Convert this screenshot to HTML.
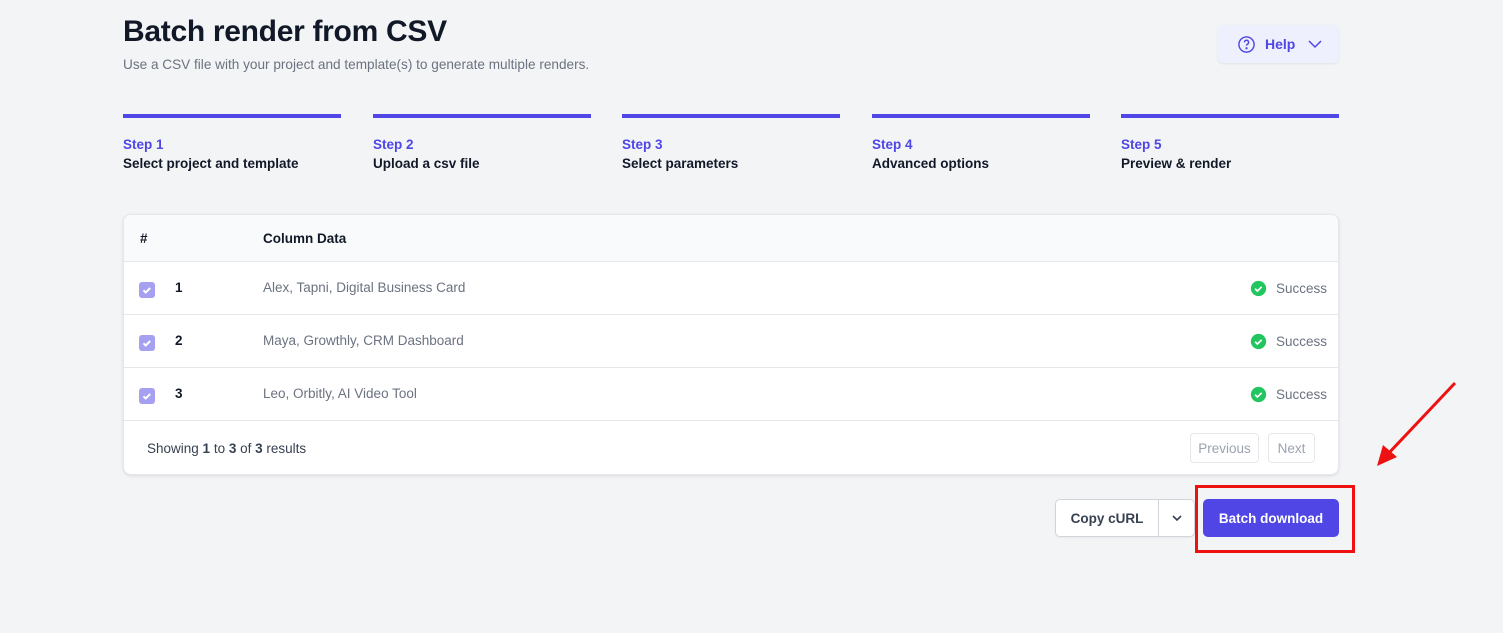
<!DOCTYPE html>
<html><head><style>
*{box-sizing:border-box;margin:0;padding:0}
body{width:1503px;height:633px;background:#f3f4f6;font-family:"Liberation Sans",sans-serif;position:relative;overflow:hidden;color:#111827}
.abs{position:absolute}
h1{position:absolute;left:123px;top:15px;font-size:30px;font-weight:700;color:#111827;letter-spacing:-0.3px}
.sub{left:123px;top:57px;font-size:13.6px;color:#6b7280}
.help{left:1218px;top:25px;width:121px;height:38px;background:#eef0fd;border-radius:6px;box-shadow:0 1px 2px rgba(0,0,0,.08);color:#4f46e5;font-size:14px;font-weight:700;display:flex;align-items:center;padding-left:19px}
.step{top:114px;width:218px;border-top:4px solid #4f46e5;padding-top:19px}
.step .n{color:#4f46e5;font-size:13.5px;font-weight:600}
.step .t{font-size:13.5px;font-weight:700;color:#111827;margin-top:4px}
.card{left:123px;top:214px;width:1216px;height:261px;background:#fff;border-radius:8px;box-shadow:0 1px 3px rgba(0,0,0,.1);border:1px solid #e5e7eb;overflow:hidden}
.hdr{height:47px;background:#f9fafb;border-bottom:1px solid #e5e7eb;font-size:13.5px;font-weight:700;position:relative}
.row{height:53px;border-bottom:1px solid #e5e7eb;position:relative;font-size:13.5px}
.cb{position:absolute;left:15px;top:20px;width:16px;height:16px;border-radius:3px;background:#a5a0f0}
.num{position:absolute;left:51px;top:18px;font-weight:700}
.data{position:absolute;left:139px;top:18px;color:#6b7280}
.ok{position:absolute;right:11px;top:18px;color:#6b7280;display:flex;align-items:center;gap:9px}
.pbtn{position:absolute;top:12px;height:30px;border:1px solid #e5e7eb;border-radius:4px;color:#9ca3af;font-size:13.5px;display:flex;align-items:center;justify-content:center}
</style></head><body>
<h1>Batch render from CSV</h1>
<div class="abs sub">Use a CSV file with your project and template(s) to generate multiple renders.</div>
<div class="abs help"><svg width="19" height="19" viewBox="0 0 20 20" fill="none" stroke="#4f46e5" stroke-width="1.5"><circle cx="10" cy="10" r="8"/><path d="M7.8 7.8a2.2 2.2 0 1 1 3 2c-.6.3-.8.7-.8 1.4"/><circle cx="10" cy="14" r=".5" fill="#4f46e5"/></svg><span style="margin-left:9px">Help</span><svg style="margin-left:13px" width="14" height="10" viewBox="0 0 14 10" fill="none" stroke="#4f46e5" stroke-width="1.5"><path d="M1 2l6 6 6-6"/></svg></div>
<div class="abs step" style="left:123px"><div class="n">Step 1</div><div class="t">Select project and template</div></div>
<div class="abs step" style="left:373px"><div class="n">Step 2</div><div class="t">Upload a csv file</div></div>
<div class="abs step" style="left:622px"><div class="n">Step 3</div><div class="t">Select parameters</div></div>
<div class="abs step" style="left:872px"><div class="n">Step 4</div><div class="t">Advanced options</div></div>
<div class="abs step" style="left:1121px;width:218px"><div class="n">Step 5</div><div class="t">Preview &amp; render</div></div>
<div class="abs card">
<div class="hdr"><span class="abs" style="left:16px;top:16px">#</span><span class="abs" style="left:139px;top:16px">Column Data</span></div>
<div class="row"><div class="cb"><svg width="16" height="16" viewBox="0 0 16 16" fill="none" stroke="#fff" stroke-width="2"><path d="M4.5 8.3l2.2 2.2 4.5-4.5"/></svg></div><span class="num">1</span><span class="data">Alex, Tapni, Digital Business Card</span><span class="ok"><svg width="17" height="17" viewBox="0 0 20 20"><circle cx="10" cy="10" r="9" fill="#22c55e"/><path d="M6 10.3l2.7 2.7 5-5" stroke="#fff" stroke-width="2" fill="none"/></svg>Success</span></div>
<div class="row"><div class="cb"><svg width="16" height="16" viewBox="0 0 16 16" fill="none" stroke="#fff" stroke-width="2"><path d="M4.5 8.3l2.2 2.2 4.5-4.5"/></svg></div><span class="num">2</span><span class="data">Maya, Growthly, CRM Dashboard</span><span class="ok"><svg width="17" height="17" viewBox="0 0 20 20"><circle cx="10" cy="10" r="9" fill="#22c55e"/><path d="M6 10.3l2.7 2.7 5-5" stroke="#fff" stroke-width="2" fill="none"/></svg>Success</span></div>
<div class="row"><div class="cb"><svg width="16" height="16" viewBox="0 0 16 16" fill="none" stroke="#fff" stroke-width="2"><path d="M4.5 8.3l2.2 2.2 4.5-4.5"/></svg></div><span class="num">3</span><span class="data">Leo, Orbitly, AI Video Tool</span><span class="ok"><svg width="17" height="17" viewBox="0 0 20 20"><circle cx="10" cy="10" r="9" fill="#22c55e"/><path d="M6 10.3l2.7 2.7 5-5" stroke="#fff" stroke-width="2" fill="none"/></svg>Success</span></div>
<div style="position:relative;height:54px;font-size:13.5px"><span class="abs" style="left:23px;top:20px;color:#374151">Showing <b>1</b> to <b>3</b> of <b>3</b> results</span>
<div class="pbtn" style="left:1066px;width:69px">Previous</div><div class="pbtn" style="left:1144px;width:47px">Next</div></div>
</div>
<div class="abs" style="left:1055px;top:499px;width:140px;height:38px;background:#fff;border:1px solid #d1d5db;border-radius:5px;display:flex;font-size:13.5px;font-weight:600;color:#374151;box-shadow:0 1px 2px rgba(0,0,0,.05)">
<div style="width:103px;border-right:1px solid #d1d5db;display:flex;align-items:center;justify-content:center">Copy cURL</div>
<div style="flex:1;display:flex;align-items:center;justify-content:center"><svg width="12" height="8" viewBox="0 0 12 8" fill="none" stroke="#374151" stroke-width="1.6"><path d="M2 2l4 4 4-4"/></svg></div></div>
<div class="abs" style="left:1203px;top:499px;width:136px;height:38px;background:#4f46e5;border-radius:5px;color:#fff;font-size:13.5px;font-weight:700;display:flex;align-items:center;justify-content:center">Batch download</div>
<div class="abs" style="left:1195px;top:485px;width:160px;height:68px;border:3px solid #ee1111"></div>
<svg class="abs" style="left:1365px;top:375px" width="100" height="100" viewBox="0 0 100 100"><path d="M90 8L22 80" stroke="#ee1111" stroke-width="3"/><path d="M12 91L18 70L32 82Z" fill="#ee1111"/></svg>
</body></html>
